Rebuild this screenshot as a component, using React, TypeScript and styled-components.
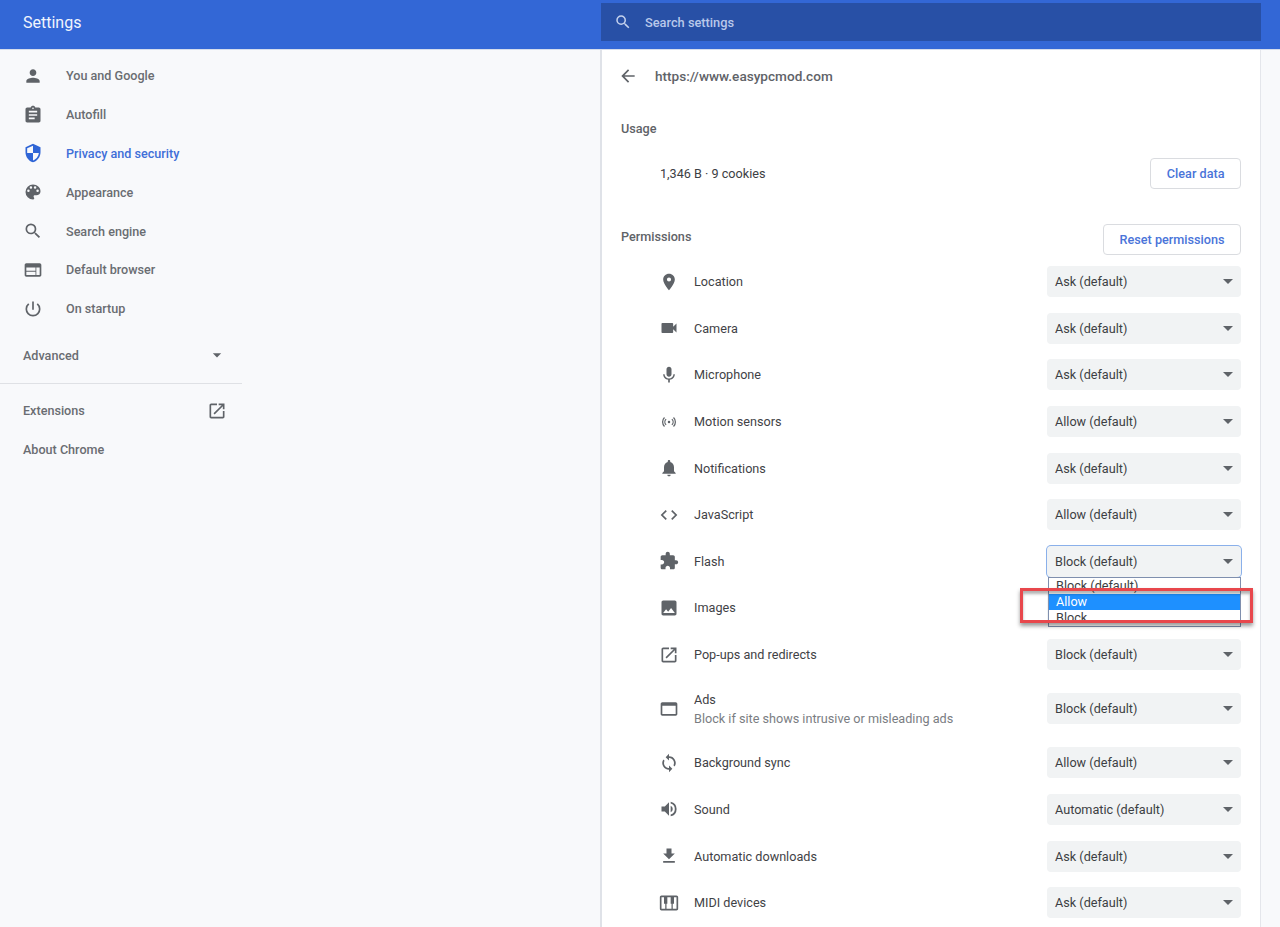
import React from "react";
import styled, { createGlobalStyle } from "styled-components";

const GlobalStyle = createGlobalStyle`
  html, body {
    margin: 0;
    height: 100%;
    overflow: hidden;
    background: #f8f9fb;
    font-family: Roboto, "Liberation Sans", sans-serif;
  }
`;

const Page = styled.div`
  width: 1280px;
  height: 927px;
  overflow: hidden;
  display: flex;
  flex-direction: column;
`;

const Header = styled.header`
  height: 50px;
  flex: none;
  display: flex;
  align-items: flex-start;
  background: #3367d6;
  border-bottom: 1px solid #d5dcec;
  box-sizing: border-box;
`;

const Title = styled.h1`
  width: 601px;
  margin: 0;
  padding: 13px 0 0 23px;
  box-sizing: border-box;
  font-size: 16px;
  line-height: 20px;
  font-weight: 400;
  color: #f1f5fd;
`;

const SearchBox = styled.div`
  width: 660px;
  height: 38px;
  margin-top: 3px;
  padding-left: 13px;
  box-sizing: border-box;
  display: flex;
  align-items: center;
  gap: 13px;
  background: #2850a6;
  color: #b9c8ea;
  font-size: 12.8px;
  font-weight: 500;
`;

const Body = styled.div`
  flex: 1;
  display: flex;
  min-height: 0;
`;

const Sidebar = styled.nav`
  width: 242px;
  margin-right: 358px;
  flex: none;
  padding-top: 6.5px;
  color: #5f6368;
  font-size: 12.6px;
  font-weight: 500;
`;

const NavItem = styled.div<{ $active?: boolean }>`
  height: 38.8px;
  display: flex;
  align-items: center;
  padding-left: 23px;
  gap: 23px;
  color: ${(p) => (p.$active ? "#3f6fd8" : "#6a6d72")};
  svg {
    width: 20px;
    height: 20px;
    flex: none;
    fill: ${(p) => (p.$active ? "#2f65d6" : "#5f6368")};
  }
`;

const NavLink = styled.div`
  height: 38.8px;
  display: flex;
  align-items: center;
  justify-content: space-between;
  padding: 0 15px 0 23px;
  color: #6a6d72;
  svg {
    width: 20px;
    height: 20px;
    fill: #5f6368;
  }
`;

const AdvancedLink = styled(NavLink)`
  margin-top: 8px;
`;

const Divider = styled.hr`
  margin: 8px 0 7.5px;
  border: 0;
  border-top: 1px solid #dfe1e5;
`;

const Card = styled.main`
  width: 661px;
  flex: none;
  box-sizing: border-box;
  background: #fff;
  border-left: 2px solid #dfe2e8;
  border-right: 1px solid #e4e6eb;
  padding: 0 19px 0 19px;
  color: #3c4043;
  font-size: 12.65px;
`;

const TopRow = styled.div`
  height: 52px;
  margin-left: -3px;
  display: flex;
  align-items: center;
  gap: 17px;
  font-size: 13.6px;
  font-weight: 500;
  color: #5f6368;
  svg {
    width: 20px;
    height: 20px;
    fill: #5f6368;
    flex: none;
  }
`;

const SectionLabel = styled.div`
  color: #5f6368;
  font-weight: 500;
`;

const UsageHead = styled(SectionLabel)`
  margin-top: 19px;
  line-height: 16px;
`;

const UsageRow = styled.div`
  height: 32px;
  margin-top: 20px;
  padding-left: 39px;
  display: flex;
  align-items: center;
  justify-content: space-between;
`;

const PermHead = styled.div`
  height: 32px;
  margin-top: 34px;
  display: flex;
  align-items: center;
  justify-content: space-between;
  ${SectionLabel} {
    margin-top: -5px;
  }
`;

const OutlineButton = styled.div`
  height: 31px;
  padding: 0 15.5px;
  box-sizing: border-box;
  display: flex;
  align-items: center;
  border: 1px solid #dadce0;
  border-radius: 4px;
  color: #4a74d9;
  font-weight: 500;
  background: #fff;
`;

const Rows = styled.div`
  margin-top: 3.5px;
`;

const Row = styled.div<{ $tall?: boolean }>`
  height: ${(p) => (p.$tall ? "61.7px" : "46.6px")};
  display: flex;
  align-items: center;
  padding-left: 38px;
  position: relative;
`;

const RowIcon = styled.div`
  width: 20px;
  height: 20px;
  flex: none;
  margin-right: 15px;
  svg {
    display: block;
    width: 20px;
    height: 20px;
    fill: #5f6368;
  }
`;

const RowText = styled.div`
  flex: 1;
  line-height: 19px;
  color: #3f4246;
`;

const Secondary = styled.div`
  color: #7a7d82;
`;

const Select = styled.div<{ $focus?: boolean }>`
  width: 194px;
  height: 31px;
  padding: 0 8px;
  box-sizing: border-box;
  flex: none;
  display: flex;
  align-items: center;
  justify-content: space-between;
  border-radius: 4px;
  background: #f1f3f4;
  color: #3c4043;
  box-shadow: ${(p) => (p.$focus ? "0 0 0 1px #8ab0ea" : "none")};
  &::after {
    content: "";
    border-left: 5px solid transparent;
    border-right: 5px solid transparent;
    border-top: 5px solid #5f6368;
  }
`;

/* native select popup, open over the Images row */
const Popup = styled.div`
  position: absolute;
  top: 39px;
  right: 0;
  width: 193px;
  height: 50px;
  box-sizing: border-box;
  overflow: hidden;
  border: 1px solid #7f8fae;
  background: #fff;
  color: #3c4043;
  z-index: 2;
`;

const PopupOption = styled.div<{ $selected?: boolean }>`
  height: 16px;
  line-height: 16px;
  padding-left: 7px;
  background: ${(p) => (p.$selected ? "#1e90ff" : "transparent")};
  color: ${(p) => (p.$selected ? "#fff" : "#3c4043")};
`;

const Highlight = styled.div`
  position: absolute;
  top: 49.5px;
  right: -12px;
  width: 233px;
  height: 35px;
  box-sizing: border-box;
  border: 3px solid #e8474c;
  box-shadow: 0 3px 4px rgba(0, 0, 0, 0.4), inset 0 3px 3px rgba(0, 0, 0, 0.3);
  z-index: 3;
`;

const icons = {
  person: "M12 12c2.2 0 4-1.8 4-4s-1.8-4-4-4-4 1.8-4 4 1.8 4 4 4zm0 2c-2.7 0-8 1.3-8 4v2h16v-2c0-2.7-5.3-4-8-4z",
  assignment: "M19 3h-4.2C14.4 1.8 13.3 1 12 1s-2.4.8-2.8 2H5c-1.1 0-2 .9-2 2v14c0 1.1.9 2 2 2h14c1.1 0 2-.9 2-2V5c0-1.1-.9-2-2-2zm-7 0c.6 0 1 .4 1 1s-.4 1-1 1-1-.4-1-1 .4-1 1-1zm2 14H7v-2h7v2zm3-4H7v-2h10v2zm0-4H7V7h10v2z",
  shield: "M12 1L3 5v6c0 5.5 3.8 10.7 9 12 5.2-1.3 9-6.5 9-12V5l-9-4zm0 11h7c-.5 4.1-3.3 7.8-7 8.9V12H5V6.3l7-3.1V12z",
  palette: "M12 3a9 9 0 0 0 0 18c.8 0 1.5-.7 1.5-1.5 0-.4-.1-.7-.4-1-.2-.3-.4-.6-.4-1 0-.8.7-1.5 1.5-1.5H16c2.8 0 5-2.2 5-5 0-4.4-4-8-9-8zm-5.5 9a1.5 1.5 0 1 1 0-3 1.5 1.5 0 0 1 0 3zm3-4a1.5 1.5 0 1 1 0-3 1.5 1.5 0 0 1 0 3zm5 0a1.5 1.5 0 1 1 0-3 1.5 1.5 0 0 1 0 3zm3 4a1.5 1.5 0 1 1 0-3 1.5 1.5 0 0 1 0 3z",
  search: "M15.5 14h-.79l-.28-.27A6.47 6.47 0 0 0 16 9.5 6.5 6.5 0 1 0 9.5 16c1.61 0 3.09-.59 4.23-1.57l.27.28v.79l5 4.99L20.49 19l-4.99-5zm-6 0C7.01 14 5 11.99 5 9.5S7.01 5 9.5 5 14 7.01 14 9.5 11.99 14 9.5 14z",
  browser: "M20 4H4c-1.1 0-2 .9-2 2v12c0 1.1.9 2 2 2h16c1.1 0 2-.9 2-2V6c0-1.1-.9-2-2-2zm-5 14H4v-4h11v4zm0-5H4V9h11v4zm5 5h-4V9h4v9z",
  power: "M13 3h-2v10h2V3zm4.8 2.2l-1.4 1.4A7 7 0 1 1 7.6 6.6L6.2 5.2a9 9 0 1 0 11.6 0z",
  launch: "M19 19H5V5h7V3H5c-1.1 0-2 .9-2 2v14c0 1.1.9 2 2 2h14c1.1 0 2-.9 2-2v-7h-2v7zM14 3v2h3.6l-9.8 9.8 1.4 1.4L19 6.4V10h2V3h-7z",
  back: "M20 11H7.8l5.6-5.6L12 4l-8 8 8 8 1.4-1.4L7.8 13H20v-2z",
  location: "M12 2C8.1 2 5 5.1 5 9c0 5.3 7 13 7 13s7-7.7 7-13c0-3.9-3.1-7-7-7zm0 9.5a2.5 2.5 0 1 1 0-5 2.5 2.5 0 0 1 0 5z",
  camera: "M17 10.5V7c0-.6-.4-1-1-1H4c-.6 0-1 .4-1 1v10c0 .6.4 1 1 1h12c.6 0 1-.4 1-1v-3.5l4 4v-11l-4 4z",
  mic: "M12 14c1.7 0 3-1.3 3-3V5c0-1.7-1.3-3-3-3S9 3.3 9 5v6c0 1.7 1.3 3 3 3zm5.3-3c0 3-2.5 5.1-5.3 5.1S6.7 14 6.7 11H5c0 3.4 2.7 6.2 6 6.7V21h2v-3.3c3.3-.5 6-3.3 6-6.7h-1.7z",
  sensors: "M12 10.5a1.5 1.5 0 1 0 0 3 1.5 1.5 0 0 0 0-3zM9.03 9.03L7.97 7.97A5.7 5.7 0 0 0 7.97 16.03L9.03 14.97A4.2 4.2 0 0 1 9.03 9.03zM7.12 7.12L6.06 6.06A8.4 8.4 0 0 0 6.06 17.94L7.12 16.88A6.9 6.9 0 0 1 7.12 7.12zM14.97 9.03A4.2 4.2 0 0 1 14.97 14.97L16.03 16.03A5.7 5.7 0 0 0 16.03 7.97zM16.88 7.12A6.9 6.9 0 0 1 16.88 16.88L17.94 17.94A8.4 8.4 0 0 0 17.94 6.06z",
  bell: "M12 22c1.1 0 2-.9 2-2h-4c0 1.1.9 2 2 2zm6-6v-5c0-3.1-1.6-5.6-4.5-6.3V4c0-.8-.7-1.5-1.5-1.5s-1.5.7-1.5 1.5v.7C7.6 5.4 6 7.9 6 11v5l-2 2v1h16v-1l-2-2z",
  code: "M9.4 16.6L4.8 12l4.6-4.6L8 6l-6 6 6 6 1.4-1.4zm5.2 0l4.6-4.6-4.6-4.6L16 6l6 6-6 6-1.4-1.4z",
  puzzle: "M20.5 11H19V7c0-1.1-.9-2-2-2h-4V3.5C13 2.12 11.88 1 10.5 1S8 2.12 8 3.5V5H4c-1.1 0-1.99.9-1.99 2v3.8H3.5c1.49 0 2.7 1.21 2.7 2.7s-1.21 2.7-2.7 2.7H2V20c0 1.1.9 2 2 2h3.8v-1.5c0-1.49 1.21-2.7 2.7-2.7 1.49 0 2.7 1.21 2.7 2.7V22H17c1.1 0 2-.9 2-2v-4h1.5c1.38 0 2.5-1.12 2.5-2.5S21.88 11 20.5 11z",
  image: "M21 19V5c0-1.1-.9-2-2-2H5c-1.1 0-2 .9-2 2v14c0 1.1.9 2 2 2h14c1.1 0 2-.9 2-2zM8.5 13.5l2.5 3 3.5-4.5 4.5 6H5l3.5-4.5z",
  window: "M20 4H4c-1.1 0-2 .9-2 2v12c0 1.1.9 2 2 2h16c1.1 0 2-.9 2-2V6c0-1.1-.9-2-2-2zm0 14H4V8h16v10z",
  sync: "M12 4V1L8 5l4 4V6c3.3 0 6 2.7 6 6 0 1-.3 2-.7 2.8l1.5 1.5A8 8 0 0 0 12 4zm0 14c-3.3 0-6-2.7-6-6 0-1 .3-2 .7-2.8L5.2 7.7A8 8 0 0 0 12 20v3l4-4-4-4v3z",
  sound: "M3 9v6h4l5 5V4L7 9H3zm13.5 3A4.5 4.5 0 0 0 14 8v8a4.5 4.5 0 0 0 2.5-4zM14 3.2v2.1a7 7 0 0 1 0 13.4v2.1a9 9 0 0 0 0-17.6z",
  download: "M19 9h-4V3H9v6H5l7 7 7-7zM5 18v2h14v-2H5z",
  midi: "M21 3H3c-1.1 0-2 .9-2 2v14c0 1.1.9 2 2 2h18c1.1 0 2-.9 2-2V5c0-1.1-.9-2-2-2zM3 19V5h3v8h1.5v6H3zm6 0v-6h1V5h4v8h1v6H9zm12 0h-4.5v-6H18V5h3v14z",
};

const Icon = ({ name }: { name: keyof typeof icons }) => (
  <svg viewBox="0 0 24 24">
    <path d={icons[name]} fillRule="evenodd" />
  </svg>
);

const nav: { name: keyof typeof icons; label: string; active?: boolean }[] = [
  { name: "person", label: "You and Google" },
  { name: "assignment", label: "Autofill" },
  { name: "shield", label: "Privacy and security", active: true },
  { name: "palette", label: "Appearance" },
  { name: "search", label: "Search engine" },
  { name: "browser", label: "Default browser" },
  { name: "power", label: "On startup" },
];

const permissions: {
  name: keyof typeof icons;
  label: string;
  sub?: string;
  value: string;
}[] = [
  { name: "location", label: "Location", value: "Ask (default)" },
  { name: "camera", label: "Camera", value: "Ask (default)" },
  { name: "mic", label: "Microphone", value: "Ask (default)" },
  { name: "sensors", label: "Motion sensors", value: "Allow (default)" },
  { name: "bell", label: "Notifications", value: "Ask (default)" },
  { name: "code", label: "JavaScript", value: "Allow (default)" },
  { name: "puzzle", label: "Flash", value: "Block (default)" },
  { name: "image", label: "Images", value: "Allow (default)" },
  { name: "launch", label: "Pop-ups and redirects", value: "Block (default)" },
  {
    name: "window",
    label: "Ads",
    sub: "Block if site shows intrusive or misleading ads",
    value: "Block (default)",
  },
  { name: "sync", label: "Background sync", value: "Allow (default)" },
  { name: "sound", label: "Sound", value: "Automatic (default)" },
  { name: "download", label: "Automatic downloads", value: "Ask (default)" },
  { name: "midi", label: "MIDI devices", value: "Ask (default)" },
];

export default function App() {
  return (
    <Page>
      <GlobalStyle />
      <Header>
        <Title>Settings</Title>
        <SearchBox>
          <svg width="18" height="18" viewBox="0 0 24 24" fill="#c5d2ee">
            <path d={icons.search} />
          </svg>
          Search settings
        </SearchBox>
      </Header>
      <Body>
        <Sidebar>
          {nav.map((item) => (
            <NavItem key={item.label} $active={item.active}>
              <Icon name={item.name} />
              {item.label}
            </NavItem>
          ))}
          <AdvancedLink>
            Advanced
            <svg viewBox="0 0 24 24">
              <path d="M7 10l5 5 5-5z" />
            </svg>
          </AdvancedLink>
          <Divider />
          <NavLink>
            Extensions
            <Icon name="launch" />
          </NavLink>
          <NavLink>About Chrome</NavLink>
        </Sidebar>
        <Card>
          <TopRow>
            <Icon name="back" />
            https://www.easypcmod.com
          </TopRow>
          <UsageHead>Usage</UsageHead>
          <UsageRow>
            1,346 B · 9 cookies
            <OutlineButton>Clear data</OutlineButton>
          </UsageRow>
          <PermHead>
            <SectionLabel>Permissions</SectionLabel>
            <OutlineButton>Reset permissions</OutlineButton>
          </PermHead>
          <Rows>
            {permissions.map((p) => (
              <Row key={p.label} $tall={!!p.sub}>
                <RowIcon>
                  <Icon name={p.name} />
                </RowIcon>
                <RowText>
                  {p.label}
                  {p.sub && <Secondary>{p.sub}</Secondary>}
                </RowText>
                <Select $focus={p.label === "Flash"}>{p.value}</Select>
                {p.label === "Flash" && (
                  <>
                    <Popup>
                      <PopupOption>Block (default)</PopupOption>
                      <PopupOption $selected>Allow</PopupOption>
                      <PopupOption>Block</PopupOption>
                    </Popup>
                    <Highlight />
                  </>
                )}
              </Row>
            ))}
          </Rows>
        </Card>
      </Body>
    </Page>
  );
}
